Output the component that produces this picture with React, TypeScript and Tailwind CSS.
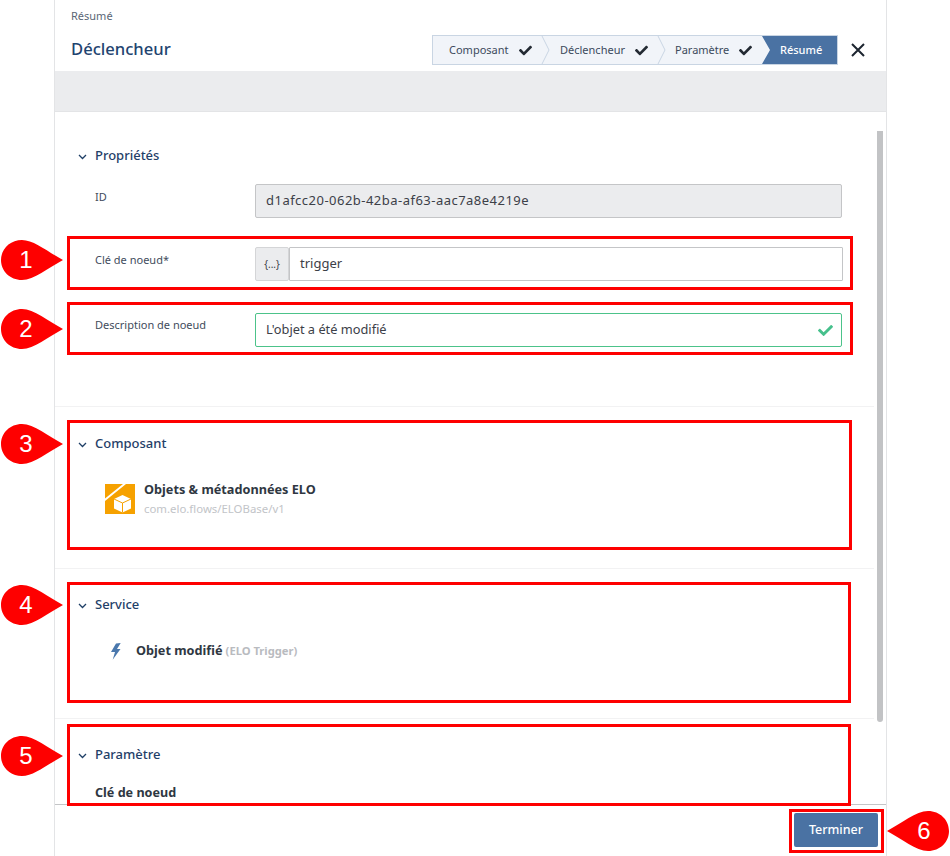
import React from "react";
import { FaCheck } from "react-icons/fa";

const font = { fontFamily: '"Noto Sans", sans-serif' };

function Chevron({ className = "" }: { className?: string }) {
  return (
    <svg width="9" height="6" viewBox="0 0 9 6" className={className} fill="none">
      <path d="M1 1l3.5 3.5L8 1" stroke="#1f3f66" strokeWidth="1.3" />
    </svg>
  );
}

function SectionHead({ title }: { title: string }) {
  return (
    <div className="flex items-center h-5 pl-[23px]">
      <Chevron className="mr-[8px] mt-[1px]" />
      <span className="text-[13px] font-medium text-[#1f4068]">{title}</span>
    </div>
  );
}

function Step({ label, width, pad, checkGap, arrow = true }: { label: string; width: string; pad: string; checkGap: string; arrow?: boolean }) {
  return (
    <div className={`relative flex items-center h-full ${width} ${pad}`}>
      <span className="text-[11px] text-[#3c4a5c]">{label}</span>
      <FaCheck className={`ml-auto text-[13px] text-[#232a33] ${checkGap}`} />
      {arrow && (
        <svg width="9" height="28" viewBox="0 0 9 28" className="absolute right-[-9px] top-0" fill="none">
          <path d="M1 0l7 14-7 14" stroke="#c9d5e3" strokeWidth="1" />
        </svg>
      )}
    </div>
  );
}

function Callout({ n, top }: { n: number; top: number }) {
  return (
    <div className="absolute left-[1px] w-[62px] h-[40px]" style={{ top }}>
      <svg width="62" height="40" viewBox="0 0 62 40" className="absolute inset-0">
        <path d="M21 0C33 0 47 12 62 20C47 28 33 40 21 40C9 40 0 31 0 20C0 9 9 0 21 0Z" fill="#fe0000" />
      </svg>
      <span className="absolute left-0 w-[50px] top-0 h-[40px] flex items-center justify-center text-[24px] text-white [font-family:'Liberation_Sans',sans-serif]">{n}</span>
    </div>
  );
}

function RedBox({ className }: { className: string }) {
  return <div className={`absolute border-[3px] border-[#fe0000] pointer-events-none ${className}`} />;
}

export default function App() {
  return (
    <div className="relative w-[950px] h-[856px] bg-white overflow-hidden" style={font}>
      <div className="ml-[54px] w-[833px] h-[856px] border-x border-[#e3e4e6] flex flex-col">
        <header className="h-[71px] shrink-0 pl-[16px] relative">
          <div className="pt-[8px] text-[11px] leading-[16px] text-[#5a6675]">Résumé</div>
          <div className="flex items-start mt-[11px]">
            <h1 className="text-[16.6px] leading-[28px] font-medium text-[#1f4470]">Déclencheur</h1>
            <div className="ml-auto flex items-center mr-[21px]">
              <div className="flex w-[406px] h-[30px] border border-[#c9d5e3] bg-[#f1f4f9] box-border">
                <Step label="Composant" width="w-[108px]" pad="pl-[16px]" checkGap="mr-[9px]" />
                <Step label="Déclencheur" width="w-[116px]" pad="pl-[19px]" checkGap="mr-[9px]" />
                <Step label="Paramètre" width="w-[105px]" pad="pl-[18px]" checkGap="mr-[10px]" arrow={false} />
                <div className="flex-1 bg-[#4a72a3] flex items-center pl-[18px] text-[11px] font-medium text-white [clip-path:polygon(0_0,100%_0,100%_100%,0_100%,8px_50%)]">
                  Résumé
                </div>
              </div>
              <svg width="14" height="14" viewBox="0 0 14 14" className="ml-[13px]" fill="none">
                <path d="M1 1l12 12M13 1L1 13" stroke="#1d2530" strokeWidth="2" />
              </svg>
            </div>
          </div>
        </header>

        <div className="h-[41px] shrink-0 bg-[#ebecee] border-b border-[#e3e4e6]" />

        <main className="relative flex-1 min-h-0 overflow-hidden">
          <section className="h-[295px] mr-[12px] border-b border-[#f2f2f3] pt-[34px]">
            <SectionHead title="Propriétés" />
            <div className="flex mt-[18px] pl-[40px] pr-[32px] h-[34px]">
              <label className="w-[160px] text-[11px] leading-[16px] pt-[5px] text-[#3f4c5c]">ID</label>
              <div className="flex-1 flex items-center pl-[10px] rounded-[2px] border border-[#c4c5c7] bg-[#ebecee] text-[13px] tracking-[0.48px] text-[#3c4048]">
                d1afcc20-062b-42ba-af63-aac7a8e4219e
              </div>
            </div>
            <div className="flex mt-[29px] pl-[40px] pr-[31px] h-[34px]">
              <label className="w-[160px] text-[11px] leading-[16px] pt-[5px] text-[#3f4c5c]">Clé de noeud*</label>
              <div className="flex-1 flex">
                <div className="w-[34px] flex items-center justify-center rounded-[2px] border border-[#d4d5d7] bg-[#ebecee] text-[10px] text-[#3c4048]">{"{...}"}</div>
                <div className="flex-1 flex items-center pl-[10px] border border-[#c4c5c7] rounded-[1px] text-[13px] text-[#3c4048]">trigger</div>
              </div>
            </div>
            <div className="flex mt-[32px] pl-[40px] pr-[32px] h-[34px]">
              <label className="w-[160px] text-[11px] leading-[16px] pt-[4px] text-[#3f4c5c]">Description de noeud</label>
              <div className="flex-1 flex items-center pl-[10px] pr-[8px] rounded-[2px] border border-[#4cc38a] text-[12.8px] text-[#3c4048]">
                L'objet a été modifié
                <FaCheck className="ml-auto text-[15px] text-[#46c08c]" />
              </div>
            </div>
          </section>

          <section className="h-[162px] mr-[12px] border-b border-[#f2f2f3] pt-[27px]">
            <SectionHead title="Composant" />
            <div className="flex items-center pl-[50px] mt-[26px]">
              <svg width="30" height="30" viewBox="0 0 30 30">
                <rect x="0" y="0" width="30" height="30" fill="#f6a100" />
                <path d="M0 14.5L18 0h3L0 17Z" fill="#ffffff" />
                <path d="M17.5 11l8.5 4v9.5l-8.5 4-8.5-4V15Z" fill="#ffffff" />
                <path d="M9 15l8.5 4 8.5-4M17.5 19v9.5" stroke="#f6a100" strokeWidth="1" fill="none" />
              </svg>
              <div className="ml-[9px]">
                <div className="text-[12.7px] leading-[18px] font-bold text-[#2f3742]">Objets &amp; métadonnées ELO</div>
                <div className="text-[11.4px] leading-[16px] mt-[3px] text-[#c2c4c8]">com.elo.flows/ELOBase/v1</div>
              </div>
            </div>
          </section>

          <section className="h-[150px] mr-[12px] border-b border-[#f2f2f3] pt-[26px]">
            <SectionHead title="Service" />
            <div className="flex items-center pl-[56px] mt-[26px] h-5">
              <svg width="10" height="17" viewBox="0 0 10 17">
                <polygon points="5,0.5 9.7,0 6,6 9.5,6 1.7,16.8 4,9 0,9" fill="#4a78ad" />
              </svg>
              <span className="ml-[15px] text-[12.7px] font-bold text-[#2f3742]">Objet modifié</span>
              <span className="ml-[3px] text-[11.2px] font-bold text-[#b9bbbf]">(ELO Trigger)</span>
            </div>
          </section>

          <section className="pt-[26px] mr-[12px]">
            <SectionHead title="Paramètre" />
            <div className="pl-[40px] mt-[19px] text-[12.6px] leading-[18px] font-bold text-[#2f3742]">Clé de noeud</div>
          </section>

          <div className="absolute right-[3px] top-[19px] w-[6px] h-[591px] rounded-b-[3px] bg-[#c2c3c5]" />
        </main>

        <footer className="h-[52px] shrink-0 border-t border-[#c4c5c7] flex items-start justify-end pr-[8px] pt-[8px]">
          <button className="w-[84px] h-[34px] pt-[1px] rounded-[2px] bg-[#4a72a3] text-[12.5px] font-medium text-white">Terminer</button>
        </footer>
      </div>

      <RedBox className="left-[67px] top-[236px] w-[786px] h-[54px]" />
      <RedBox className="left-[67px] top-[302px] w-[786px] h-[53px]" />
      <RedBox className="left-[67px] top-[420px] w-[785px] h-[130px]" />
      <RedBox className="left-[67px] top-[582px] w-[784px] h-[121px]" />
      <RedBox className="left-[67px] top-[724px] w-[784px] h-[82px]" />
      <RedBox className="left-[789px] top-[809px] w-[95px] h-[44px]" />
      <Callout n={1} top={240} />
      <Callout n={2} top={309} />
      <Callout n={3} top={424} />
      <Callout n={4} top={585} />
      <Callout n={5} top={736} />
      <div className="absolute left-[887px] top-[811px] w-[62px] h-[40px]">
        <svg width="62" height="40" viewBox="0 0 62 40" className="absolute inset-0">
          <path d="M41 0C29 0 15 12 0 20C15 28 29 40 41 40C53 40 62 31 62 20C62 9 53 0 41 0Z" fill="#fe0000" />
        </svg>
        <span className="absolute right-0 w-[50px] top-0 h-[40px] flex items-center justify-center text-[24px] text-white [font-family:'Liberation_Sans',sans-serif]">6</span>
      </div>
    </div>
  );
}
